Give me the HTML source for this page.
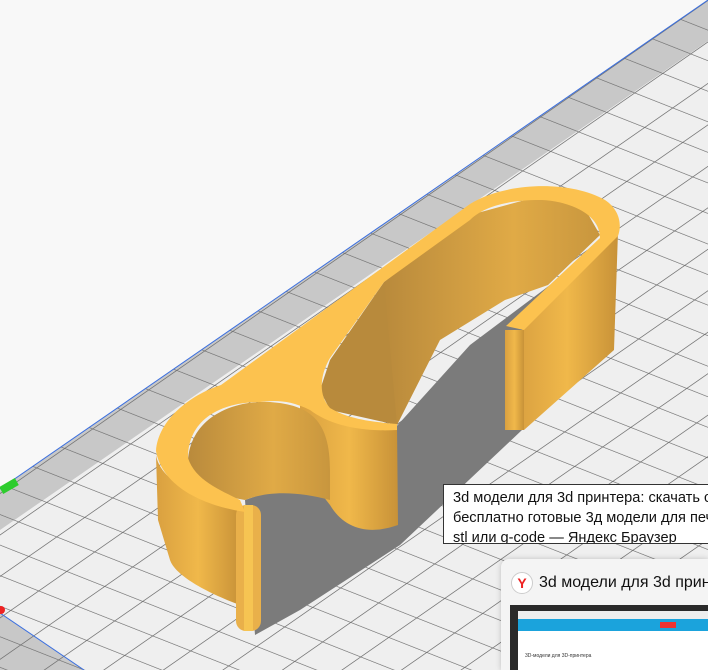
<!DOCTYPE html>
<html><head><meta charset="utf-8"><style>
html,body{margin:0;padding:0;width:708px;height:670px;overflow:hidden;background:#f8f8f8;font-family:"Liberation Sans",sans-serif;position:relative}
svg{position:absolute;left:0;top:0}
.tip{position:absolute;left:443px;top:484px;width:280px;height:60px;background:#fff;border:1px solid #333;box-sizing:border-box;padding:3px 0 0 9px;font-size:14.6px;line-height:20px;color:#111;white-space:nowrap;overflow:hidden}
.card{position:absolute;left:501px;top:559px;width:207px;height:111px;background:#f4f4f4;border-radius:8px 0 0 0;box-shadow:0 0 6px rgba(0,0,0,.2);overflow:hidden}
.card .t{position:absolute;left:38px;top:15px;font-size:16px;color:#111;white-space:nowrap}
.yi{position:absolute;left:10px;top:13px;width:20px;height:20px;border-radius:50%;background:#fff;border:1px solid #ccc;color:#e22;font-weight:bold;font-size:14px;text-align:center;line-height:20px}
.th{position:absolute;left:9px;top:46px;width:230px;height:90px;background:#fff}
</style></head><body>
<svg width="708" height="670" viewBox="0 0 708 670">
<defs>
<pattern id="g" width="10" height="10" patternUnits="userSpaceOnUse" patternTransform="matrix(2.8 -1.95 3.8 1.5 708 0)">
<rect width="10" height="10" fill="#efefef"/>
<path d="M0 0H10M0 0V10" stroke="#6e6e6e" stroke-width="0.45" fill="none"/>
</pattern>
<pattern id="b" width="10" height="10" patternUnits="userSpaceOnUse" patternTransform="matrix(2.8 -1.95 3.8 1.5 708 0)">
<rect width="10" height="10" fill="#c8c8c8"/>
<path d="M0 0H10M0 0V10" stroke="#6e6e6e" stroke-width="0.45" fill="none"/>
</pattern>
<linearGradient id="w" x1="0" x2="1"><stop offset="0" stop-color="#d9a040"/><stop offset=".5" stop-color="#f0b84a"/><stop offset="1" stop-color="#c89238"/></linearGradient>
<linearGradient id="w2" x1="0" x2="1"><stop offset="0" stop-color="#b98a3c"/><stop offset=".6" stop-color="#e0aa46"/><stop offset="1" stop-color="#c8963e"/></linearGradient>
</defs>
<polygon points="708,0 708,670 0,670 0,489" fill="url(#g)"/>
<polygon points="708,0 708,41 0,530 0,489" fill="url(#b)"/>
<polygon points="0,613 84,670 0,670" fill="url(#b)"/>
<line x1="708" y1="0" x2="0" y2="489" stroke="#3a6fe0" stroke-width="1"/>
<line x1="0" y1="613" x2="84" y2="670" stroke="#3a6fe0" stroke-width="1"/>
<rect x="0" y="482" width="18" height="8" fill="#2ecc2e" transform="rotate(-30 9 486)"/>
<circle cx="1" cy="610" r="4" fill="#e22"/>
<polygon points="245,500 330,470 395,428 470,345 550,285 560,300 522,430 400,545 300,610 255,635" fill="#7b7b7b"/>
<polygon points="618,232 614,350 524,430 516,336" fill="url(#w)"/>
<polygon points="384,282 470,215 540,196 580,200 600,235 548,285 505,300 440,340 397,425 384,420" fill="url(#w2)"/>
<polygon points="384,282 397,425 330,410 320,390 330,360" fill="#b88a3c"/>
<rect x="505" y="330" width="19" height="100" fill="url(#w)"/>
<path d="M300,400 C320,420 360,430 397,425 L398,525 C370,535 345,530 330,505 C310,480 300,460 300,440Z" fill="url(#w)"/>
<path d="M188,470 C185,420 230,400 270,402 C310,405 330,420 330,470 L330,500 C300,492 270,490 245,500 C215,495 195,485 188,470Z" fill="url(#w2)"/>
<path d="M156,455 C160,480 195,498 240,505 L240,605 C205,592 175,575 170,560 L158,520Z" fill="url(#w)"/>
<rect x="236" y="505" width="25" height="126" rx="10" fill="#e9b04a"/>
<rect x="244" y="505" width="9" height="126" fill="#f6c452"/>
<path fill-rule="evenodd" fill="#fcc24f" d="M156,451 C158,420 190,395 221,385 L470,204 C505,182 570,180 605,200 C620,210 622,225 618,236 L524,330 L506,326 L600,238 C600,210 560,200 540,200 C500,200 480,210 470,220 L384,282 L330,358 C320,375 318,395 330,408 C350,420 375,422 397,424 L397,430 C360,432 330,425 310,410 C290,400 275,400 260,402 C220,402 188,420 188,458 C195,480 220,490 240,500 L245,512 C200,505 162,485 156,451Z"/>
</svg>
<div class="tip">3d модели для 3d принтера: скачать с<br>бесплатно готовые 3д модели для печати<br>stl или g-code — Яндекс Браузер</div>
<div class="card"><div class="yi">Y</div><div class="t">3d модели для 3d принтера</div>
<div class="th">
<div style="position:absolute;left:0;top:0;width:230px;height:6px;background:#2a2a2a"></div>
<div style="position:absolute;left:0;top:6px;width:230px;height:8px;background:#eee"></div>
<div style="position:absolute;left:0;top:0;width:8px;height:90px;background:#2a2a2a"></div>
<div style="position:absolute;left:8px;top:14px;width:230px;height:12px;background:#1ba3dc"></div>
<div style="position:absolute;left:150px;top:17px;width:16px;height:6px;background:#e33"></div>
<div style="position:absolute;left:15px;top:48px;font-size:5px;color:#333">3D-модели для 3D-принтера</div>
</div></div>
</body></html>
